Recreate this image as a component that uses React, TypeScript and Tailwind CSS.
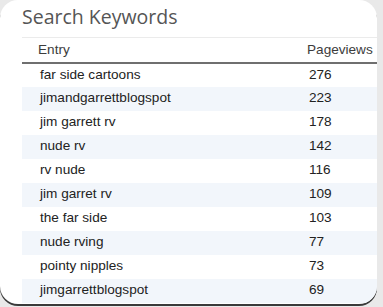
const rows: [string, number][] = [
  ['far side cartoons', 276],
  ['jimandgarrettblogspot', 223],
  ['jim garrett rv', 178],
  ['nude rv', 142],
  ['rv nude', 116],
  ['jim garret rv', 109],
  ['the far side', 103],
  ['nude rving', 77],
  ['pointy nipples', 73],
  ['jimgarrettblogspot', 69],
];

export default function App() {
  return (
    <div className="w-[383px] h-[307px] bg-[#e9e9e9] overflow-hidden">
      <div className="w-[377px] h-[304px] bg-white rounded-[18px] overflow-hidden shadow-[0_2px_0_#3a3a3a]">
        <h1 className="pl-[22px] pt-[3px] h-[37px] text-[19.5px] leading-[28px] text-[#555] font-['Open_Sans',sans-serif]">
          Search Keywords
        </h1>
        <table className="ml-[22px] w-[355px] border-collapse font-['Liberation_Sans',Arial,sans-serif] text-[13.6px] text-[#222]">
          <thead>
            <tr className="border-t border-t-[#ebebeb] border-b-2 border-b-[#6f6f6f] h-[25px]">
              <th className="pl-[16px] text-left font-normal text-[#3c3c3c]">Entry</th>
              <th className="w-[70px] text-left font-normal text-[#3c3c3c]">Pageviews</th>
            </tr>
          </thead>
          <tbody>
            {rows.map(([entry, views], i) => (
              <tr key={entry} className={`h-[24px] ${i % 2 ? 'bg-[#f2f6fb]' : 'bg-white'}`}>
                <td className="pl-[18px]">{entry}</td>
                <td className="pl-[2px]">{views}</td>
              </tr>
            ))}
          </tbody>
        </table>
      </div>
    </div>
  );
}
